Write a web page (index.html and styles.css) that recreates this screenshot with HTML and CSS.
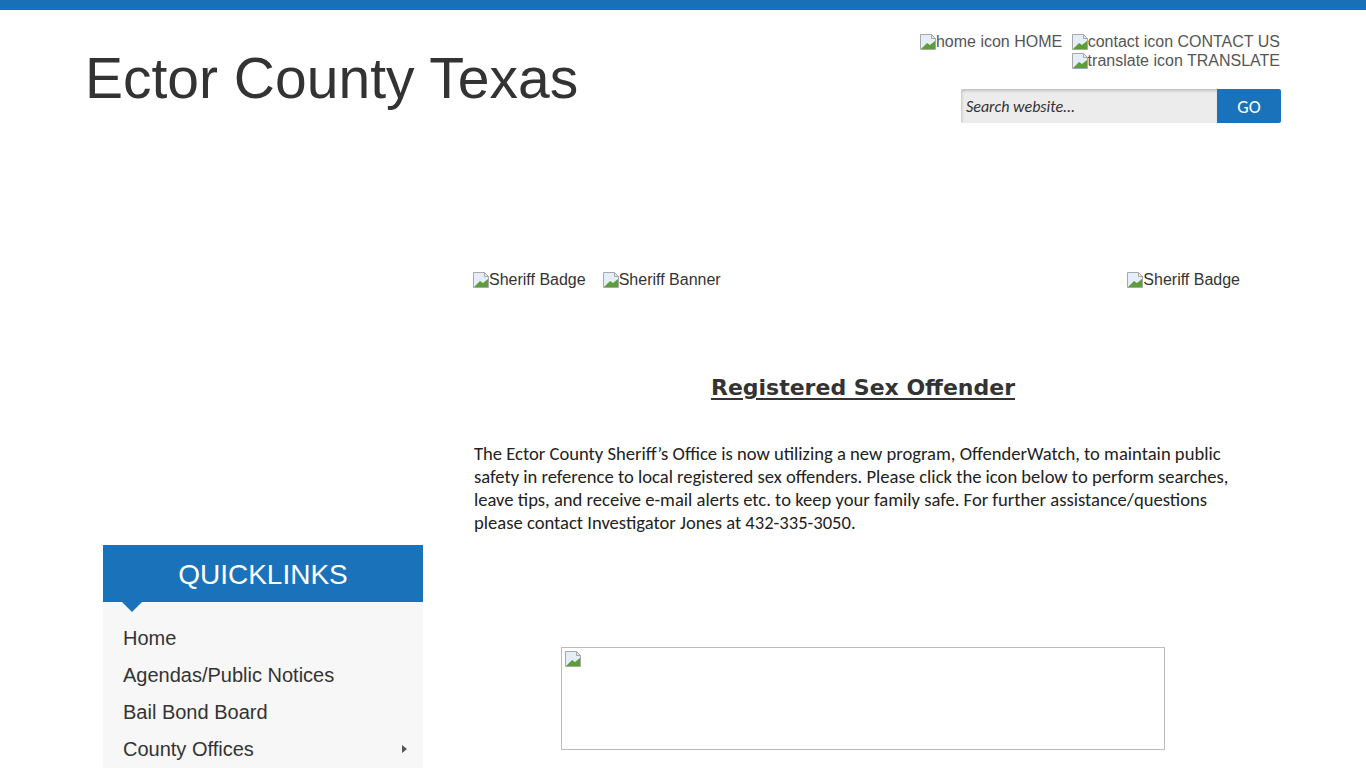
FILE: index.html
```html
<!DOCTYPE html>
<html lang="en">
<head>
  <meta charset="utf-8" />
  <meta name="viewport" content="width=device-width, initial-scale=1.0" />
  <title>Registered Sex Offender - Ector County Texas</title>
  <link rel="stylesheet" href="styles.css">
</head>
<body>
  <div class="topbar"></div>

  <header class="site-header wrap">
    <h1 class="site-title">Ector County Texas</h1>
    <div class="header-tools">
      <ul class="util-links">
        <li><a href="#"><span class="broken"><svg viewBox="0 0 16 16" width="16" height="16"><path d="M0.5 0.5h11l4 4v11h-15z" fill="#e4eef8" stroke="#a8a8a8"/><path d="M11.5 0.5v4h4" fill="none" stroke="#a8a8a8"/><path d="M1 15l6-6 3 2 5-4v8z" fill="#5d9d3a"/></svg>home icon</span> HOME</a></li>
        <li><a href="#"><span class="broken"><svg viewBox="0 0 16 16" width="16" height="16"><path d="M0.5 0.5h11l4 4v11h-15z" fill="#e4eef8" stroke="#a8a8a8"/><path d="M11.5 0.5v4h4" fill="none" stroke="#a8a8a8"/><path d="M1 15l6-6 3 2 5-4v8z" fill="#5d9d3a"/></svg>contact icon</span> CONTACT US</a></li>
        <li><a href="#"><span class="broken"><svg viewBox="0 0 16 16" width="16" height="16"><path d="M0.5 0.5h11l4 4v11h-15z" fill="#e4eef8" stroke="#a8a8a8"/><path d="M11.5 0.5v4h4" fill="none" stroke="#a8a8a8"/><path d="M1 15l6-6 3 2 5-4v8z" fill="#5d9d3a"/></svg>translate icon</span> TRANSLATE</a></li>
      </ul>
      <form class="search" onsubmit="return false;">
        <input type="text" placeholder="Search website..." />
        <button type="submit">GO</button>
      </form>
    </div>
  </header>

  <div class="page wrap">
    <aside class="sidebar">
      <nav class="quicklinks">
        <h2>QUICKLINKS</h2>
        <ul>
          <li><a href="#">Home</a></li>
          <li><a href="#">Agendas/Public Notices</a></li>
          <li><a href="#">Bail Bond Board</a></li>
          <li class="has-sub"><a href="#">County Offices</a></li>
        </ul>
      </nav>
    </aside>

    <main class="content">
      <div class="banner-row">
        <span class="broken"><svg viewBox="0 0 16 16" width="16" height="16"><path d="M0.5 0.5h11l4 4v11h-15z" fill="#e4eef8" stroke="#a8a8a8"/><path d="M11.5 0.5v4h4" fill="none" stroke="#a8a8a8"/><path d="M1 15l6-6 3 2 5-4v8z" fill="#5d9d3a"/></svg>Sheriff Badge</span>
        <span class="broken"><svg viewBox="0 0 16 16" width="16" height="16"><path d="M0.5 0.5h11l4 4v11h-15z" fill="#e4eef8" stroke="#a8a8a8"/><path d="M11.5 0.5v4h4" fill="none" stroke="#a8a8a8"/><path d="M1 15l6-6 3 2 5-4v8z" fill="#5d9d3a"/></svg>Sheriff Banner</span>
        <span class="broken badge-right"><svg viewBox="0 0 16 16" width="16" height="16"><path d="M0.5 0.5h11l4 4v11h-15z" fill="#e4eef8" stroke="#a8a8a8"/><path d="M11.5 0.5v4h4" fill="none" stroke="#a8a8a8"/><path d="M1 15l6-6 3 2 5-4v8z" fill="#5d9d3a"/></svg>Sheriff Badge</span>
      </div>

      <h2 class="page-heading">Registered Sex Offender</h2>

      <p class="intro">The Ector County Sheriff’s Office is now utilizing a new program, OffenderWatch, to maintain public safety in reference to local registered sex offenders. Please click the icon below to perform searches, leave tips, and receive e-mail alerts etc. to keep your family safe. For further assistance/questions please contact Investigator Jones at 432-335-3050.</p>

      <a class="offender-link" href="#">
        <svg viewBox="0 0 16 16" width="16" height="16"><path d="M0.5 0.5h11l4 4v11h-15z" fill="#e4eef8" stroke="#a8a8a8"/><path d="M11.5 0.5v4h4" fill="none" stroke="#a8a8a8"/><path d="M1 15l6-6 3 2 5-4v8z" fill="#5d9d3a"/></svg>
      </a>
    </main>
  </div>
</body>
</html>
```

FILE: styles.css
```css
/* Base */
body {
  margin: 0;
  font-family: "Liberation Sans", Arial, sans-serif;
  color: #333;
  background: #fff;
}

a {
  color: inherit;
  text-decoration: none;
}

ul {
  list-style: none;
  margin: 0;
  padding: 0;
}

.wrap {
  width: 1200px;
  margin: 0 auto;
}

.topbar {
  height: 10px;
  background: linear-gradient(#1d6fb2, #0f73c4);
}

/* Broken image placeholders */
.broken {
  display: inline-flex;
  align-items: flex-end;
}

.broken svg {
  display: block;
  margin-bottom: 1px;
}

/* Header */
.site-header {
  display: flex;
  justify-content: space-between;
  align-items: flex-start;
  height: 113px;
}

.site-title {
  margin: 36px 0 0 2px;
  font-size: 57px;
  line-height: 64px;
  font-weight: normal;
  color: #333;
}

.header-tools {
  padding-top: 22px;
  display: flex;
  flex-direction: column;
  align-items: flex-end;
}

.util-links {
  width: 370px;
  margin-right: 3px;
  text-align: right;
  font-size: 16px;
  line-height: 19px;
  color: #555;
}

.util-links li {
  display: inline;
  margin-left: 5px;
  white-space: nowrap;
}

.util-links li .broken {
  vertical-align: bottom;
}

.search {
  display: flex;
  margin-top: 19px;
  margin-right: 2px;
  height: 34px;
}

.search input {
  width: 256px;
  box-sizing: border-box;
  border: 0;
  padding: 0 5px;
  background: #ececec;
  box-shadow: inset 1px 2px 3px rgba(0, 0, 0, 0.18);
  border-radius: 2px 0 0 2px;
  font-family: Carlito, Lato, sans-serif;
  font-style: italic;
  font-size: 16px;
  color: #333;
  outline: none;
}

.search input::placeholder {
  color: #333;
}

.search button {
  width: 64px;
  border: 0;
  border-radius: 0 2px 2px 0;
  background: #1a73ba;
  color: #fff;
  font-family: Carlito, Lato, sans-serif;
  font-size: 18px;
  padding: 2px 0 0;
}

/* Page columns */
.page {
  display: grid;
  grid-template-columns: 360px 1fr;
  padding-top: 147px;
}

.sidebar {
  padding: 275px 20px 0;
}

.quicklinks h2 {
  position: relative;
  margin: 0;
  height: 57px;
  line-height: 60px;
  background: #1a73ba;
  color: #fff;
  text-align: center;
  font-size: 28px;
  font-weight: normal;
}

/* little pointer under the title */
.quicklinks h2::after {
  content: "";
  position: absolute;
  left: 19px;
  bottom: -10px;
  border-left: 10px solid transparent;
  border-right: 10px solid transparent;
  border-top: 10px solid #1a73ba;
}

.quicklinks ul {
  background: #f7f7f7;
  padding: 18px 20px 20px;
}

.quicklinks li {
  position: relative;
  font-size: 20px;
  line-height: 37px;
}

.quicklinks li.has-sub::after {
  content: "";
  position: absolute;
  right: -4px;
  top: 14px;
  border-top: 4px solid transparent;
  border-bottom: 4px solid transparent;
  border-left: 5px solid #555;
}

/* Content */
.content {
  padding: 0 30px;
  text-align: center;
}

.banner-row {
  display: flex;
  align-items: flex-end;
  font-size: 16px;
  line-height: 19px;
  color: #333;
  text-align: left;
}

.banner-row .broken + .broken {
  margin-left: 17px;
}

.banner-row .badge-right {
  margin-left: auto !important;
  margin-right: 13px;
}

.page-heading {
  margin: 84px 0 0;
  font-family: "DejaVu Sans", Verdana, sans-serif;
  font-size: 22px;
  line-height: 29px;
  font-weight: bold;
  text-decoration: underline;
  text-decoration-thickness: 2px;
  text-underline-offset: 3px;
  color: #333;
}

.intro {
  margin: 40px 0 0;
  padding-left: 1px;
  text-align: left;
  font-family: Carlito, Lato, sans-serif;
  font-size: 18.6px;
  line-height: 23px;
  color: #222;
}

.offender-link {
  display: block;
  width: 602px;
  height: 101px;
  margin: 113px auto 0;
  border: 1px solid #bbb;
  text-align: left;
}

.offender-link svg {
  margin: 3px 0 0 3px;
}
```
